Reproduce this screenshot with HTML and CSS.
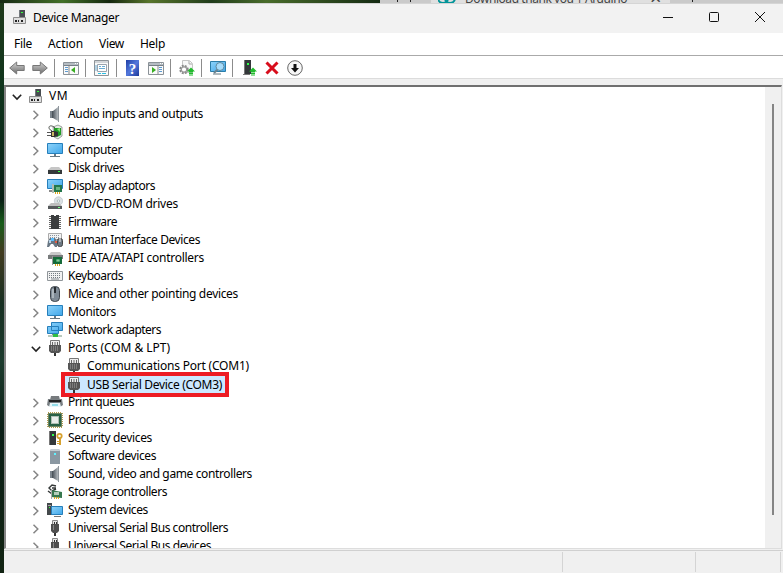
FILE: index.html
```
<!DOCTYPE html>
<html lang="en">
<head>
<meta charset="utf-8">
<title>Device Manager</title>
<link rel="stylesheet" href="styles.css">
</head>
<body>
<svg class="defs" width="0" height="0">
<defs>
<linearGradient id="sky" x1="0" y1="0" x2="1" y2="1"><stop offset="0" stop-color="#8ed3fa"/><stop offset="1" stop-color="#3fa7ea"/></linearGradient>
<linearGradient id="metal" x1="0" y1="0" x2="1" y2="0"><stop offset="0" stop-color="#555d65"/><stop offset="1" stop-color="#b4babf"/></linearGradient>
<linearGradient id="steel" x1="0" y1="0" x2="0" y2="1"><stop offset="0" stop-color="#d5d5d5"/><stop offset="1" stop-color="#6b6b6b"/></linearGradient>
<linearGradient id="navy" x1="0" y1="0" x2="1" y2="1"><stop offset="0" stop-color="#1f3fa5"/><stop offset=".5" stop-color="#5378dc"/><stop offset="1" stop-color="#1b3799"/></linearGradient>
</defs>
<symbol id="vm" viewBox="0 0 16 16"><path d="M6 1h6v8H6z" fill="#474c50"/><path d="M6 1h1v8H6z" fill="#747a7e"/><path d="M8 3h2v1H8z" fill="#35ff3d"/><path d="M.5 8.500h12v6H.5z" fill="#dedede" stroke="#8c8c8c"/><path d="M2 11h2v2H2zM5 11h1v2H5zM8 11h2v2H8z" fill="#222"/></symbol>
<symbol id="speaker" viewBox="0 0 16 16"><path d="M3 5h3v7H3z" fill="#7c858d"/><path d="M5 5l1 0v7H5z" fill="#4d555c"/><path d="M6 5l5-4v14l-5-3z" fill="url(#metal)"/><path d="M11 0h1v16h-1z" fill="#8f969c"/></symbol>
<symbol id="battery" viewBox="0 0 16 16"><path d="M6 3l5-2 4 2v9l-4 3-4-2z" fill="#e4e9e4" stroke="#778078" stroke-width=".7"/><path d="M7 4l7 0v7l-4 2-3-2z" fill="#219b26"/><path d="M10 5l3-1v4z" fill="#8bec7a"/><path d="M5 7C-1 4 3-1 8 4" fill="none" stroke="#4c514b"/><path d="M4 7h4l3 1v4l-3 1H4z" fill="#333"/><path d="M0 8.500h4M0 11.500h4" stroke="#555"/><path d="M5 8h2v4H5z" fill="#cab762"/></symbol>
<symbol id="monitor" viewBox="0 0 16 16"><path d="M.5 1.500h15v10H.5z" fill="url(#sky)" stroke="#267fbb"/><path d="M7 12h2v2h4v1H3v-1h4z" fill="#687984"/></symbol>
<symbol id="disk" viewBox="0 0 16 16"><path d="M4 7h8l3 3H1z" fill="#c6c6c6"/><path d="M1 10h14v4H1z" fill="#34383a"/><path d="M11 11h2v1h-2z" fill="#34ff40"/></symbol>
<symbol id="display" viewBox="0 0 16 16"><path d="M.5 1.500h15v9H.5z" fill="url(#sky)" stroke="#267fbb"/><path d="M2 12h6v2H2z" fill="#888"/><path d="M6 7h9v7H6z" fill="#23774c"/><path d="M9 9h4v3H9z" fill="#66b783"/><path d="M5 6h2v9H5z" fill="#b3bab3"/><path d="M8 14h1v2H8zm2 0h1v2h-1zm2 0h1v2h-1z" fill="#dba51c"/></symbol>
<symbol id="dvd" viewBox="0 0 16 16"><circle cx="11.500" cy="5" r="4.200" fill="#d9dfe2" stroke="#b4bec4" stroke-width=".6"/><circle cx="11.500" cy="5" r="1.200" fill="#fff" stroke="#abb"/><path d="M4 7h8l3 3H1z" fill="#bdbdbd"/><path d="M1 10h14v3H1z" fill="#55595b"/><path d="M11 11h2v1h-2z" fill="#7f8"/></symbol>
<symbol id="chip" viewBox="0 0 16 16"><path d="M2 2.500h12M2 4.500h12M2 6.500h12M2 8.500h12M2 10.500h12M2 12.500h12M2 14.500h12" stroke="#666"/><path d="M4 1h3v1h2V1h3v14H4z" fill="#3b3d3e"/></symbol>
<symbol id="hid" viewBox="0 0 16 16"><path d="M1.500 1.500h13v6h-13z" fill="#f3f3f3" stroke="#aaa"/><path d="M3 3.500h10M3 5.500h10" stroke="#8994a0" stroke-dasharray="1"/><path d="M1 9l2-3h5l2 3v6H8l-2-3H4l-2 3H0z" fill="#687683"/><path d="M2 8h2v3H2z" fill="#b9d3e7"/><path d="M4 6h3v3H4z" fill="#5bbdff"/><path d="M8 9h2v2H8z" fill="#e15b43"/><rect x="10.500" y="6.500" width="5" height="8" rx="2" fill="#6c7883" stroke="#444"/><path d="M13 6v4" stroke="#eee"/></symbol>
<symbol id="ide" viewBox="0 0 16 16"><path d="M4 2h9l3 4H1z" fill="#c8c8c8"/><path d="M1 5h15v4H1z" fill="#787b7c"/><path d="M6 7h9v7H6z" fill="#176a3a"/><path d="M9 9h4v3H9z" fill="#89c799" stroke="#073" stroke-width=".7"/><path d="M5 6h1v9H5z" fill="#999"/><path d="M8 14h1v2H8zm2 0h1v2h-1zm2 0h1v2h-1z" fill="#dba51c"/></symbol>
<symbol id="keyboard" viewBox="0 0 16 16"><path d="M.5 3.500h15v9H.5z" fill="#f2f2f2" stroke="#90969a"/><path d="M2 5.500h12M2 7.500h12M2 9.500h12" stroke="#737b82" stroke-dasharray="1"/><path d="M4 11h8" stroke="#858b90"/></symbol>
<symbol id="mouse" viewBox="0 0 16 16"><rect x="3.500" y=".5" width="9" height="15" rx="4" fill="#7f8b96" stroke="#3e454c"/><path d="M5 3h2v9H5z" fill="#acb6bd"/><path d="M8 1v6" stroke="#262b30" stroke-width="2"/></symbol>
<symbol id="network" viewBox="0 0 16 16"><path d="M4.500.5h11v8h-11zM.5 4.500h11v7H.5z" fill="url(#sky)" stroke="#267fbb"/><path d="M5 12h4v1H5z" fill="#888"/><path d="M1 13h14v2H1z" fill="#b9c9bc"/><path d="M6 12h5v3H6z" fill="#30bd44"/></symbol>
<symbol id="port" viewBox="0 0 16 16"><path d="M3.500.5h9v5h-9z" fill="#eee" stroke="#777"/><path d="M5.500 2v3m2.500-3v3m2.500-3v3" stroke="#666"/><path d="M2 5h12v6l-2 2H4l-2-2z" fill="#555"/><path d="M4.500 6v5m2-5v5m2-5v5m2-5v5" stroke="#888" stroke-width=".8"/><path d="M7 13h2v3H7z" fill="#333"/></symbol>
<symbol id="printer" viewBox="0 0 16 16"><path d="M4 2h8l1 4H3z" fill="#777b7e"/><path d="M1 5h14l1 6-3 2H3l-3-2z" fill="#777d81"/><path d="M2 6h12v2H2z" fill="#222"/><path d="M3 9h10l1 4H2z" fill="#e8f5f8"/><path d="M5 10h6v2H5z" fill="#94dce8"/></symbol>
<symbol id="cpu" viewBox="0 0 16 16"><path d="M1 1h14v14H1z" fill="none" stroke="#b49a4b" stroke-width="2" stroke-dasharray="1"/><path d="M1.500 1.500h13v13h-13z" fill="#286045" stroke="#6f8461"/><path d="M4 4h8v8H4z" fill="#aebeb3"/><path d="M5 5h6v6H5z" fill="#e8ece9"/></symbol>
<symbol id="security" viewBox="0 0 16 16"><path d="M2 1h7v14H2z" fill="#34383a"/><path d="M2 1h1v14H2z" fill="#777"/><path d="M5 4h2v2H5z" fill="#32ff4c"/><circle cx="12.500" cy="6" r="2.200" fill="none" stroke="#d6a12f" stroke-width="1.800"/><path d="M12 8h2v7h-2zm-2 3h2v1h-2zm0 2h2v1h-2z" fill="#d6a12f"/></symbol>
<symbol id="software" viewBox="0 0 16 16"><path d="M4 1h8l1 2v13H3V3z" fill="#8b98a2"/><path d="M4 1h8l1 2H3z" fill="#c3ccd2"/><path d="M7 5h2v2H7z" fill="#5ff2ff"/></symbol>
<symbol id="storage" viewBox="0 0 16 16"><path d="M9 2L5 1 2 4l3 3 4-2M5 4h4M1 7l4 3" fill="none" stroke="#343838" stroke-width="1.400"/><path d="M4 6l11 2v6L4 13z" fill="#37784f"/><path d="M7 8h5v3H7z" fill="#b4cdba"/><path d="M4 6h1v9H4z" fill="#aaa"/><path d="M7 13h1v2H7zm2 0h1v2H9zm2 0h1v2h-1z" fill="#dba51c"/></symbol>
<symbol id="system" viewBox="0 0 16 16"><path d="M0 1h5v12H0z" fill="#44494c"/><path d="M1 3h3v1H1z" fill="#aaa"/><path d="M2 5h1v1H2z" fill="#38ff43"/><path d="M4.500 4.500h11v8h-11z" fill="url(#sky)" stroke="#267fbb"/><path d="M7 14h7v1H7z" fill="#777"/></symbol>
<symbol id="usb" viewBox="0 0 16 16"><path d="M5.500.5h5v4h-5z" fill="#e7e7e7" stroke="#888"/><path d="M7 2h1v2H7zm2 0h1v2H9z" fill="#333"/><path d="M4 4h8v7l-2 2H6l-2-2z" fill="#4f4f4f"/><path d="M6 5h1v5H6z" fill="#888"/><path d="M7 13h2v3H7z" fill="#333"/></symbol>
<symbol id="right" viewBox="0 0 10 10"><path d="M2.500.8L6.800 5 2.500 9.200" fill="none" stroke="#858585" stroke-width="1.500"/></symbol>
<symbol id="down" viewBox="0 0 10 10"><path d="M.8 2.800L5 7l4.200-4.200" fill="none" stroke="#222" stroke-width="1.600"/></symbol>
<symbol id="pane" viewBox="0 0 16 16"><path d="M.5 2.500h15v12H.5z" fill="#fafafa" stroke="#8b9298"/><path d="M1 3h14v2H1z" fill="#b5bcc2"/><path d="M1 5h14v1H1z" fill="#778088"/><path d="M12 3h1v1h-1zm2 0h1v1h-1z" fill="#fff"/></symbol>
<symbol id="green" viewBox="0 0 8 8"><path d="M4 0L0 4h2v1h4V4h2zM2 5.500h4v1H2zm0 1.500h4v1H2z" fill="#20bb2c"/></symbol>
</svg>

<div class="desktop">
  <div class="browser"><i class="mark"></i><i class="mark"></i><div class="tab"><svg class="loop" viewBox="0 0 18 8"><circle cx="5" cy="0" r="5"/><circle cx="12" cy="0" r="5"/></svg><span data-width="162">Download thank you | Arduino</span><b>×</b></div><i class="mark"></i></div>
  <main class="window">
    <header class="title">
      <svg class="icon"><use href="#vm"/></svg><span data-width="86">Device Manager</span>
      <div class="controls">
        <svg viewBox="0 0 12 12"><path d="M1 6.500h10"/></svg>
        <svg viewBox="0 0 12 12"><rect x="1.500" y="1.500" width="9" height="9" rx="1"/></svg>
        <svg viewBox="0 0 12 12"><path d="M1 1l10 10M11 1L1 11"/></svg>
      </div>
    </header>
    <nav class="menu"><span data-width="18">File</span><span data-width="35">Action</span><span data-width="25">View</span><span data-width="25">Help</span></nav>
    <div class="toolbar">
      <svg class="tool back" viewBox="0 0 16 16"><path d="M.7 8l7-6v3.500h7.500v5H7.700V14z" fill="url(#steel)" stroke="#777"/></svg>
      <svg class="tool next" viewBox="0 0 16 16"><path d="M15.300 8l-7-6v3.500H.8v5h7.500V14z" fill="url(#steel)" stroke="#777"/></svg>
      <i class="rule"></i>
      <svg class="tool" viewBox="0 0 16 16"><use href="#pane"/><path d="M2 7h3v1H2zm0 2h3v1H2zm0 2h3v1H2z" fill="#5e9bd1"/><path d="M6 6v8" stroke="#888"/><path d="M12 7v6L8 10z" fill="#38ad22"/></svg>
      <i class="rule"></i>
      <svg class="tool" viewBox="0 0 16 16"><path d="M.5.5h14v15H.5z" fill="#fafafa" stroke="#8d9398"/><path d="M1 2h13" stroke="#aab1b8"/><path d="M3.500 4.500h9v7h-9z" fill="#fff" stroke="#9aa4ae"/><path d="M5 6.500h2m1 0h3M5 8.500h6M2 5v6" stroke="#6aadd4"/><path d="M4 13h3v1H4zm4 0h4v1H8z" fill="#29bfe5"/></svg>
      <i class="rule"></i>
      <svg class="tool" viewBox="0 0 16 16"><path d="M1 0h13v16H1z" fill="url(#navy)"/><text x="7.500" y="13.500" class="question">?</text></svg>
      <svg class="tool gap" viewBox="0 0 16 16"><use href="#pane"/><path d="M10 6v8" stroke="#888"/><path d="M4 7v6l4-3z" fill="#38ad22"/><path d="M11 7h3v1h-3zm0 2h3v1h-3zm0 2h3v1h-3z" fill="#5e9bd1"/></svg>
      <i class="rule"></i>
      <svg class="tool" viewBox="0 0 16 16"><path d="M3.500.5h7l3 3v9h-10z" fill="#f8f8f8" stroke="#c5c5c5"/><path d="M10 1v3h3" fill="none" stroke="#aaa"/><circle cx="5" cy="9.500" r="3.500" fill="#ddd" stroke="#888" stroke-width="2.400" stroke-dasharray="1.800 1"/><circle cx="5" cy="9.500" r="2.700" fill="#fff" stroke="#999" stroke-width="1.200"/><svg x="8" y="7" width="8" height="9"><use href="#green"/></svg></svg>
      <i class="rule"></i>
      <svg class="tool" viewBox="0 0 16 16"><path d="M.5 1.500h15v10H.5z" fill="url(#sky)" stroke="#2b7da8"/><path d="M3 14h8" stroke="#65777e"/><path d="M8 9l-4 4" stroke="#698391" stroke-width="2"/><circle cx="10" cy="6.500" r="4" fill="#a7dcfa" stroke="#62899d"/></svg>
      <i class="rule"></i>
      <svg class="tool" viewBox="0 0 16 16"><path d="M3 0h7v14H3z" fill="#34383a"/><path d="M3 0h1v14H3z" fill="#777"/><path d="M6 3h2v2H6z" fill="#32ff4c"/><path d="M2 14h7v1H2z" fill="#777"/><svg x="8" y="7" width="8" height="9"><use href="#green"/></svg></svg>
      <svg class="tool gap" viewBox="0 0 16 16"><path d="M2.500 2.500l11 11M13.500 2.500l-11 11" stroke="#d80d1c" stroke-width="3"/></svg>
      <svg class="tool gap" viewBox="0 0 16 16"><circle cx="8" cy="8" r="7.300" fill="#f7f7f7" stroke="#666"/><path d="M6.500 4h3v4H12l-4 4.500L4 8h2.500z" fill="#111"/></svg>
    </div>
    <section class="panel"><div class="tree" id="tree"></div><div class="scroll"><i></i></div></section>
    <footer class="status"><i></i><i></i><i></i></footer>
  </main>
</div>
<script src="tree.js"></script>
</body>
</html>
```
FILE: styles.css
```
* { box-sizing: border-box; }
body { margin: 0; overflow: hidden; font: 12px/18px "Noto Sans", "Open Sans", sans-serif; color: #000; }
.defs { position: absolute; }
.desktop { width: 783px; height: 573px; overflow: hidden; background: linear-gradient(180deg, #203a1b 0, #10351d 15%, #092015 35%, #185c1a 39%, #423b20 44%, #172f22 53%, #1c3b2d 63%, #0b1f17 75%, #122413 100%); display: flex; flex-direction: column; }
.browser { height: 3px; flex: none; padding-left: 380px; display: flex; overflow: hidden; background: linear-gradient(90deg, #172914 0, #427028 8%, #14270f 14%, #58752c 19%, #203c1b 27%, #496c2b 34%, #152b13 48.500%, #cacaca 48.500%); }
.mark { width: 1px; height: 2px; background: #222; margin-left: 17px; }
.mark + .mark { margin-left: 12px; }
.tab { width: 239px; height: 3px; margin: 0 22px 0 20px; background: #e0e0e0; display: flex; padding-left: 7px; line-height: 3px; color: #444; }
.tab + .mark { margin-left: 0; }
.tab span { height: 18px; line-height: 18px; margin: -10px 0 0 9px; white-space: nowrap; flex: none; width: 162px; }
.tab b { font: 20px/20px "Noto Sans", sans-serif; margin: -12px 0 0 23px; }
.loop { width: 18px; height: 8px; margin-top: -2px; fill: none; stroke: #009499; stroke-width: 2; flex: none; }
.window { width: 779px; height: 570px; margin-left: 4px; background: #f0f0f0; display: flex; flex-direction: column; }
.title { height: 30px; background: #f2f2f2; display: flex; align-items: center; padding-left: 9px; border-top: 1px solid #d5d5d5; }
.title > .icon { margin-top: -3px; }
.title > span { margin-left: 4px; margin-top: -1px; white-space: nowrap; }
.icon { width: 16px; height: 16px; flex: none; }
.controls { display: flex; gap: 34px; margin: -3px 0 0 auto; padding-right: 17px; }
.controls svg { width: 12px; height: 12px; fill: none; stroke: #111; stroke-width: 1; }
.menu { height: 23px; background: #fff; border-bottom: 1px solid #aaa; display: flex; padding: 2px 0 0 10px; white-space: nowrap; }
.menu span { flex: none; margin-right: 16px; }
.toolbar { height: 23px; background: #fff; border-bottom: 1px solid #dcdcdc; display: flex; align-items: center; padding-left: 5px; }
.tool { width: 16px; height: 16px; flex: none; margin-top: 2px; }
.next { margin-left: 7px; }
.rule { width: 1px; height: 18px; background: #8c8c8c; margin: 2px 8px 0 6px; flex: none; }
.gap { margin-left: 7px; }
.question { font: bold 15px "Liberation Serif", serif; fill: #fff; text-anchor: middle; }
.panel { height: 464px; margin-top: 6px; border: 2px solid #707070; border-left: 2px solid #858585; border-right: 1px solid #ddd; border-bottom: 1px solid #ddd; width: 778px; display: flex; overflow: hidden; background: #fff; }
.tree { flex: 1; overflow: hidden; }
.row { height: 18px; display: flex; align-items: center; padding-left: 25px; white-space: nowrap; }
.row .arrow { width: 10px; height: 10px; margin: 2px 6px 0 0; flex: none; }
.row .label { height: 18px; margin-left: 5px; line-height: 18px; }
.root { padding-left: 6px; }
.root .icon { margin-left: 1px; margin-right: -1px; }
.child { padding-left: 60px; }
.selected { width: 168px; height: 25px; margin: -3px 0 -4px 55px; padding-left: 1px; border: 4px solid #ed1c24; background: #cce8ff; position: relative; z-index: 1; }
.scroll { width: 16px; background: #f0f0f0; padding: 17px 0 0 7px; }
.scroll i { display: block; width: 2px; height: 411px; background: #858585; }
.status { height: 23px; margin-top: 1px; border-top: 1px solid #d0d0d0; display: flex; justify-content: flex-end; padding: 1px 2px 0 0; }
.status i { width: 85px; height: 20px; border-right: 1px solid #d4d4d4; }
.status i:first-child { width: 559px; }
.status i:nth-child(2) { width: 133px; }
```
FILE: tree.js
```
const devices = [
  ["vm", "VM", 19, "root"],
  ["speaker", "Audio inputs and outputs", 135],
  ["battery", "Batteries", 45],
  ["monitor", "Computer", 54],
  ["disk", "Disk drives", 56],
  ["display", "Display adaptors", 87],
  ["dvd", "DVD/CD-ROM drives", 110],
  ["chip", "Firmware", 49],
  ["hid", "Human Interface Devices", 132],
  ["ide", "IDE ATA/ATAPI controllers", 136],
  ["keyboard", "Keyboards", 55],
  ["mouse", "Mice and other pointing devices", 170],
  ["monitor", "Monitors", 48],
  ["network", "Network adapters", 93],
  ["port", "Ports (COM & LPT)", 102, "open"],
  ["port", "Communications Port (COM1)", 162, "child"],
  ["port", "USB Serial Device (COM3)", 135, "child selected"],
  ["printer", "Print queues", 66],
  ["cpu", "Processors", 56],
  ["security", "Security devices", 84],
  ["software", "Software devices", 88],
  ["speaker", "Sound, video and game controllers", 184],
  ["storage", "Storage controllers", 99],
  ["system", "System devices", 80],
  ["usb", "Universal Serial Bus controllers", 160],
  ["usb", "Universal Serial Bus devices", 143]
];

const tree = document.getElementById("tree");
for (const [icon, label, width, kind = ""] of devices) {
  const row = document.createElement("div");
  row.className = "row " + kind;
  const arrow = kind === "root" || kind === "open" ? "down" : "right";
  if (!kind.includes("child")) row.innerHTML = `<svg class="arrow"><use href="#${arrow}"/></svg>`;
  row.innerHTML += `<svg class="icon"><use href="#${icon}"/></svg>`;
  const text = document.createElement("span");
  text.className = "label";
  text.dataset.width = width;
  text.textContent = label;
  row.append(text);
  tree.append(row);
}

for (const label of document.querySelectorAll("[data-width]")) {
  const range = document.createRange();
  range.selectNodeContents(label);
  const natural = range.getBoundingClientRect().width;
  label.style.letterSpacing = (label.dataset.width - natural) / label.textContent.length + "px";
}
```
